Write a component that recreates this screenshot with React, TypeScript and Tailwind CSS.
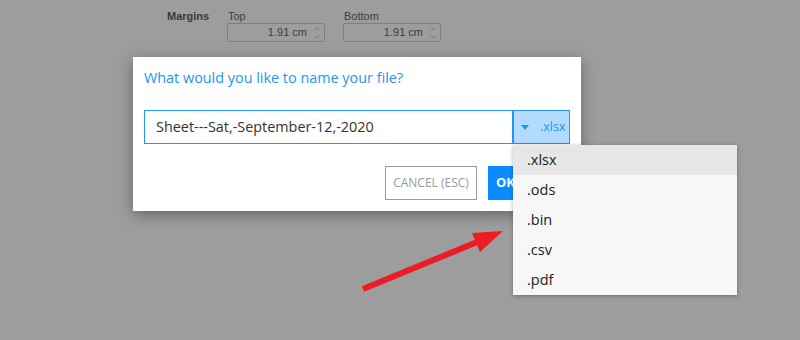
import { ChevronUp, ChevronDown } from 'lucide-react'

const formats = ['.xlsx', '.ods', '.bin', '.csv', '.pdf']

function MarginField({ label, value }: { label: string; value: string }) {
  return (
    <div className="flex flex-col">
      <div className="text-[11px] leading-[13px] text-[#3c3c3c] pl-[1px]">{label}</div>
      <div className="w-[98px] h-[19px] border border-[#7e7f7e] rounded-[2px] flex items-center justify-end pr-[3px]">
        <span className="text-[11px] text-[#3c3c3c]">{value}</span>
        <div className="flex flex-col ml-[6px] text-[#555]">
          <ChevronUp size={8} strokeWidth={1.5} />
          <ChevronDown size={8} strokeWidth={1.5} />
        </div>
      </div>
    </div>
  )
}

export default function App() {
  return (
    <div className="relative w-[800px] h-[340px] overflow-hidden bg-[#9c9d9c]" style={{ fontFamily: '"Liberation Sans", Arial, sans-serif' }}>
      {/* Page behind the overlay */}
      <div className="flex items-start pt-[10px] pl-[167px]">
        <div className="text-[11px] font-bold text-[#3a3a3a] leading-[13px] w-[60px]">Margins</div>
        <div className="flex gap-[18px]">
          <MarginField label="Top" value="1.91 cm" />
          <MarginField label="Bottom" value="1.91 cm" />
        </div>
      </div>

      {/* Save dialog */}
      <div
        className="absolute left-[133px] top-[57px] w-[448px] h-[154px] bg-white shadow-[0_4px_14px_rgba(0,0,0,0.35)] px-[11px]"
        style={{ fontFamily: '"Open Sans", sans-serif' }}
      >
        <div className="pt-[10px] text-[14.4px] leading-[22px] text-[#2196f3]">What would you like to name your file?</div>
        <div className="mt-[21px] flex h-[34px]">
          <div className="flex-1 border border-[#2196f3] flex items-center pl-[11px] text-[14.4px] text-[#333]">
            Sheet---Sat,-September-12,-2020
          </div>
          <div className="w-[57px] border border-[#2196f3] bg-[#b3dbff] flex items-center pl-[7px] gap-[11px] text-[#2196f3]">
            <svg width="8" height="5" viewBox="0 0 8 5"><path d="M0 0h8L4 5z" fill="#2196f3" /></svg>
            <span className="text-[12.5px]">.xlsx</span>
          </div>
        </div>
        <div className="mt-[22px] flex justify-end gap-[11px]">
          <div className="w-[92px] h-[34px] border border-[#9a9a9a] flex items-center justify-center text-[12px] text-[#9a9a9a]">
            CANCEL (ESC)
          </div>
          <div className="w-[82px] h-[34px] bg-[#0a8cff] flex items-center pl-[8px] text-[13px] font-bold text-white">
            OK
          </div>
        </div>
      </div>

      {/* Format dropdown */}
      <div
        className="absolute left-[513px] top-[145px] w-[224px] bg-[#f7f7f7] shadow-[0_1px_4px_rgba(0,0,0,0.3)]"
        style={{ fontFamily: '"Open Sans", sans-serif' }}
      >
        {formats.map((f, i) => (
          <div
            key={f}
            className={`h-[30px] flex items-center pl-[14px] text-[14.5px] text-[#222] ${i === 0 ? 'bg-[#e6e6e6]' : ''}`}
          >
            {f}
          </div>
        ))}
      </div>

      {/* Annotation arrow */}
      <svg className="absolute left-0 top-0" width="800" height="340">
        <line x1="363" y1="289" x2="482" y2="240" stroke="#ed1c24" strokeWidth="6" />
        <polygon points="503,231 472,233 480,252" fill="#ed1c24" />
      </svg>
    </div>
  )
}
